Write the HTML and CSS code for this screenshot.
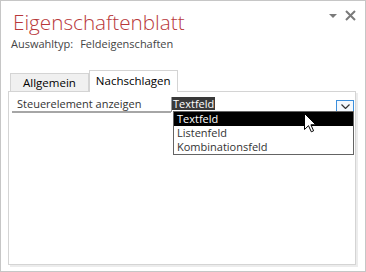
FILE: index.html
```
<!DOCTYPE html>
<html lang="de">
<head>
    <meta charset="UTF-8">
    <title>Eigenschaftenblatt</title>
    <link rel="stylesheet" href="styles.css">
</head>
<body>
    <div class="sheet">
        <div class="head">
            <h1 class="title">Eigenschaftenblatt</h1>
            <div class="win-btns">
                <span class="tri"></span>
                <svg class="close" width="11" height="11" viewBox="0 0 11 11">
                    <path d="M1 1 L10 10 M10 1 L1 10" stroke="#7a7a7a" stroke-width="2"/>
                </svg>
            </div>
        </div>
        <div class="sel-type"><span class="sel-label">Auswahltyp:</span><span>Feldeigenschaften</span></div>

        <div class="tabs">
            <div class="tab">Allgemein</div>
            <div class="tab active">Nachschlagen</div>
        </div>

        <div class="panel">
            <div class="prop-row">
                <div class="prop-name">Steuerelement anzeigen</div>
                <div class="prop-value">
                    <span class="val-sel">Textfeld</span>
                    <span class="drop-btn">
                        <svg width="9" height="5" viewBox="0 0 9 5">
                            <path d="M0.5 0.5 L4.5 4.5 L8.5 0.5" fill="none" stroke="#333" stroke-width="1.2"/>
                        </svg>
                    </span>
                    <ul class="drop-list">
                        <li class="picked">Textfeld</li>
                        <li>Listenfeld</li>
                        <li>Kombinationsfeld</li>
                    </ul>
                </div>
            </div>
        </div>

        <svg class="cursor" width="13" height="20" viewBox="0 0 13 20">
            <path d="M0.5 0.5 L0.5 16.5 L4.5 12.7 L7.3 18.8 L9.6 17.8 L6.9 11.8 L11.8 11.8 Z" fill="#fff" stroke="#000" stroke-width="1"/>
        </svg>
    </div>
</body>
</html>
```

FILE: styles.css
```
*{
    margin: 0;
    padding: 0;
    box-sizing: border-box;
}

body{
    background: #fff;
    font-family: "Open Sans", "Noto Sans", sans-serif;
}

.sheet{
    position: relative;
    width: 366px;
    height: 272px;
    border: 1px solid #c6c6c6;
    background: #fff;
}

.head{
    display: flex;
    justify-content: space-between;
    align-items: flex-start;
    height: 36px;
}

.title{
    font-weight: 300;
    font-size: 20.7px;
    line-height: 24px;
    color: #b8383b;
    padding: 9px 0 0 12px;
}

.win-btns{
    display: flex;
    align-items: center;
    gap: 8px;
    padding: 9px 9px 0 0;
}

.tri{
    width: 0;
    height: 0;
    border-left: 4px solid transparent;
    border-right: 4px solid transparent;
    border-top: 4px solid #7a7a7a;
}

.sel-type{
    font-size: 11px;
    color: #444;
    padding-left: 10px;
    line-height: 14px;
}

.sel-label{
    margin-right: 7px;
}

.tabs{
    display: flex;
    align-items: flex-end;
    height: 23px;
    margin: 17px 0 0 9px;
}

.tab{
    font-size: 11.5px;
    color: #000;
    height: 18px;
    line-height: 17px;
    padding: 0 12px;
    background: #f0f0f0;
    border: 1px solid #d4d4d4;
    border-bottom: none;
}

.tab.active{
    background: #fff;
    height: 22px;
    line-height: 19px;
    padding: 0 6px;
    margin-bottom: -1px;
    position: relative;
    border-left: 1px solid #d4d4d4;
    border-right: 1px solid #d4d4d4;
}

.panel{
    margin-left: 7px;
    width: 348px;
    height: 174px;
    border: 1px solid #d4d4d4;
    box-shadow: 2px 2px 0 #ececec;
    padding: 5px 0 0 3px;
}

.prop-row{
    display: flex;
    height: 16px;
}

.prop-name{
    width: 159px;
    font-size: 11px;
    color: #333;
    line-height: 14px;
    padding-left: 5px;
    border-bottom: 2px solid #a6a6a6;
}

.prop-value{
    position: relative;
    flex: 1;
    display: flex;
    justify-content: space-between;
    border-left: 1px solid #9a9a9a;
    height: 15px;
    padding-right: 1px;
}

.val-sel{
    background: #3a3a3a;
    color: #fff;
    font-size: 11px;
    line-height: 13px;
    height: 13px;
    padding: 0 1px;
    align-self: flex-start;
}

.drop-btn{
    width: 18px;
    height: 12px;
    margin-top: 3px;
    border: 1px solid #3c8fdc;
    background: #f4f9fe;
    display: flex;
    justify-content: center;
    align-items: center;
}

.drop-list{
    position: absolute;
    top: 14px;
    left: 1px;
    width: 181px;
    list-style: none;
    background: #fff;
    border: 1px solid #646464;
    font-size: 11px;
    color: #333;
}

.drop-list li{
    height: 14px;
    line-height: 14px;
    padding-left: 3px;
}

.drop-list li.picked{
    background: #000;
    color: #fff;
}

.cursor{
    position: absolute;
    left: 303px;
    top: 112px;
}
```
